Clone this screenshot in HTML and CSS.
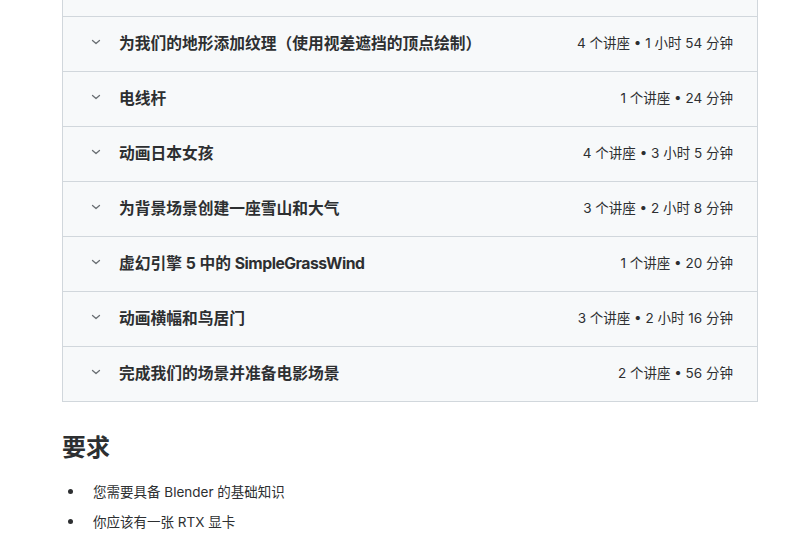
FILE: index.html
```html
<!DOCTYPE html>
<html lang="zh-CN">
<head>
<meta charset="utf-8">
<title>课程内容</title>
<link rel="stylesheet" href="styles.css">
</head>
<body>
<main class="page">
  <section class="curriculum">
    <div class="section-row section-row--cut"></div>
    <div class="section-row">
      <span class="chev"><svg width="16" height="16" viewBox="0 0 16 16"><path d="M4.5 6.5 L8 9.5 L11.5 6.5" fill="none" stroke="#6a6f73" stroke-width="1.3" stroke-linecap="round" stroke-linejoin="round"/></svg></span>
      <span class="title">为我们的地形添加纹理（使用视差遮挡的顶点绘制）</span>
      <span class="meta">4 个讲座 • 1 小时 54 分钟</span>
    </div>
    <div class="section-row">
      <span class="chev"><svg width="16" height="16" viewBox="0 0 16 16"><path d="M4.5 6.5 L8 9.5 L11.5 6.5" fill="none" stroke="#6a6f73" stroke-width="1.3" stroke-linecap="round" stroke-linejoin="round"/></svg></span>
      <span class="title">电线杆</span>
      <span class="meta">1 个讲座 • 24 分钟</span>
    </div>
    <div class="section-row">
      <span class="chev"><svg width="16" height="16" viewBox="0 0 16 16"><path d="M4.5 6.5 L8 9.5 L11.5 6.5" fill="none" stroke="#6a6f73" stroke-width="1.3" stroke-linecap="round" stroke-linejoin="round"/></svg></span>
      <span class="title">动画日本女孩</span>
      <span class="meta">4 个讲座 • 3 小时 5 分钟</span>
    </div>
    <div class="section-row">
      <span class="chev"><svg width="16" height="16" viewBox="0 0 16 16"><path d="M4.5 6.5 L8 9.5 L11.5 6.5" fill="none" stroke="#6a6f73" stroke-width="1.3" stroke-linecap="round" stroke-linejoin="round"/></svg></span>
      <span class="title">为背景场景创建一座雪山和大气</span>
      <span class="meta">3 个讲座 • 2 小时 8 分钟</span>
    </div>
    <div class="section-row">
      <span class="chev"><svg width="16" height="16" viewBox="0 0 16 16"><path d="M4.5 6.5 L8 9.5 L11.5 6.5" fill="none" stroke="#6a6f73" stroke-width="1.3" stroke-linecap="round" stroke-linejoin="round"/></svg></span>
      <span class="title">虚幻引擎 5 中的 <span class="latin">SimpleGrassWind</span></span>
      <span class="meta">1 个讲座 • 20 分钟</span>
    </div>
    <div class="section-row">
      <span class="chev"><svg width="16" height="16" viewBox="0 0 16 16"><path d="M4.5 6.5 L8 9.5 L11.5 6.5" fill="none" stroke="#6a6f73" stroke-width="1.3" stroke-linecap="round" stroke-linejoin="round"/></svg></span>
      <span class="title">动画横幅和鸟居门</span>
      <span class="meta">3 个讲座 • 2 小时 16 分钟</span>
    </div>
    <div class="section-row">
      <span class="chev"><svg width="16" height="16" viewBox="0 0 16 16"><path d="M4.5 6.5 L8 9.5 L11.5 6.5" fill="none" stroke="#6a6f73" stroke-width="1.3" stroke-linecap="round" stroke-linejoin="round"/></svg></span>
      <span class="title">完成我们的场景并准备电影场景</span>
      <span class="meta">2 个讲座 • 56 分钟</span>
    </div>
  </section>

  <section class="requirements">
    <h2 class="req-title">要求</h2>
    <ul class="req-list">
      <li class="req-item">您需要具备 Blender 的基础知识</li>
      <li class="req-item">你应该有一张 RTX 显卡</li>
    </ul>
  </section>
</main>
</body>
</html>
```

FILE: styles.css
```css
* { box-sizing: border-box; }

html, body {
  margin: 0;
  padding: 0;
  background: #ffffff;
}

body {
  font-family: Inter, "Noto Sans CJK SC", sans-serif;
  color: #2d2f31;
  overflow: hidden;
}

.page {
  width: 696px;
  margin-left: 62px;
}

.curriculum {
  margin-top: -40px;
  border: 1px solid #d1d7dc;
  background: #f7f9fa;
}

.section-row {
  display: flex;
  align-items: center;
  height: 55px;
  padding: 0 24px 4px;
  border-top: 1px solid #d1d7dc;
}

.section-row--cut {
  border-top: none;
}

.chev {
  display: flex;
  width: 16px;
  height: 16px;
  margin-left: 1px;
  margin-right: 15px;
  flex: none;
}

.title {
  flex: 1;
  font-size: 15.75px;
  font-weight: 700;
  color: #2d2f31;
  white-space: nowrap;
}

.latin {
  letter-spacing: -0.5px;
}

.meta {
  font-size: 13.5px;
  color: #2d2f31;
  white-space: nowrap;
}

.requirements {
  padding-top: 31px;
}

.req-title {
  margin: 0;
  font-size: 24px;
  line-height: 29px;
  font-weight: 700;
  color: #2d2f31;
}

.req-list {
  list-style: none;
  margin: 19px 0 0;
  padding: 0;
}

.req-item {
  display: flex;
  align-items: center;
  height: 20px;
  margin-bottom: 10px;
  font-size: 13.5px;
  color: #2d2f31;
}

.req-item::before {
  content: "";
  width: 5px;
  height: 5px;
  border-radius: 50%;
  background: #2d2f31;
  margin-left: 6px;
  margin-right: 20px;
  flex: none;
}
```
